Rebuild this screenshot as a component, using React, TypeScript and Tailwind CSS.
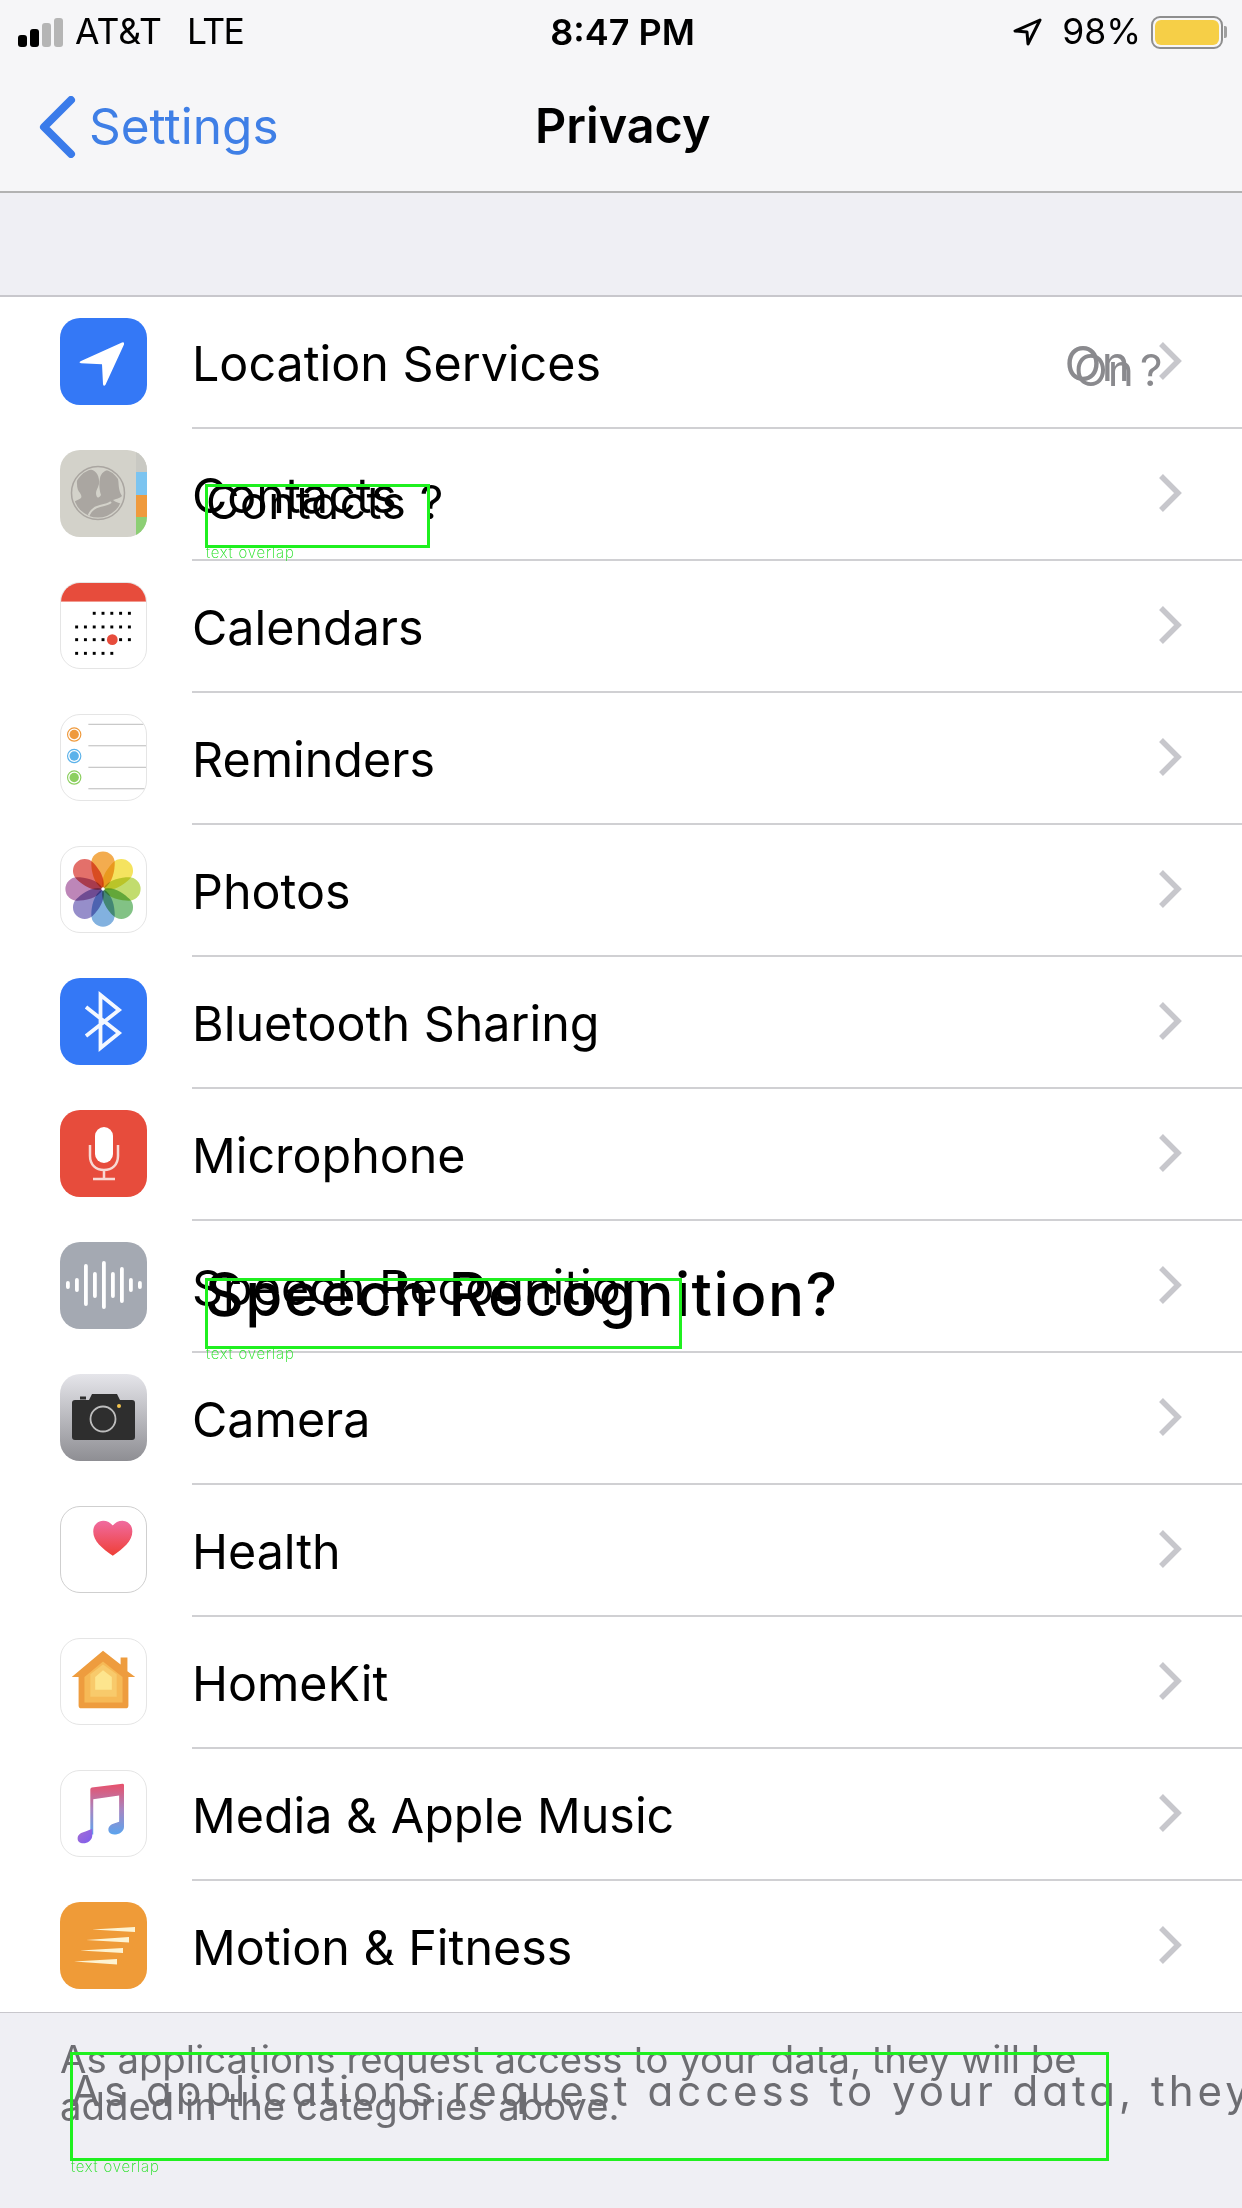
import { ReactNode } from "react";

const Tile = ({ children, className = "" }: { children: ReactNode; className?: string }) => (
  <div className={`h-[87px] w-[87px] shrink-0 overflow-hidden rounded-[20px] ${className}`}>
    <svg viewBox="0 0 87 87" className="h-full w-full">
      {children}
    </svg>
  </div>
);

const LocationIcon = () => (
  <Tile className="bg-[#3478f6]">
    <path d="M62 24.5 21 43q-3 1.500 0 2.200l21 1 1 20q.8 2.800 2.500.5L64 26.500q.5-3-2-2Z" fill="#fff" />
  </Tile>
);

const ContactsIcon = () => (
  <Tile className="bg-[#d3d2ca]">
    <rect x="76" y="0" width="11" height="22" fill="#c9c9c3" />
    <rect x="76" y="22" width="11" height="23" fill="#7cc4f0" />
    <rect x="76" y="45" width="11" height="22" fill="#ef9a3d" />
    <rect x="76" y="67" width="11" height="20" fill="#8ccf74" />
    <defs>
      <clipPath id="faces">
        <circle cx="38" cy="43" r="24.500" />
      </clipPath>
    </defs>
    <circle cx="38" cy="43" r="26.500" fill="none" stroke="#aaa6a1" strokeWidth="1.500" />
    <g clipPath="url(#faces)">
      <path d="M40 28c1-5 5-8 9-8s8 3 9 8c1 6 0 12 4 18-3 3-7 3-9 4 3 3 10 3 13 8v15H30V50c4-2 9-1 11-5 -2-6-2-12-1-17Z" fill="#aaa6a1" />
      <path d="M17 34c-1-9 4-15 11-15s12 6 11 15c-1 4-3 6-3 9 0 3 1 5 4 6 -3 1-7 4-8 9l-3 14H6V58c2-6 12-7 15-10 1-2 0-3-1-5-2-2-3-5-3-9Z" fill="#aaa6a1" />
      <path d="M27 72c1-8 4-14 13-16 5-1 9-2 11-4" fill="none" stroke="#d3d2ca" strokeWidth="2" />
    </g>
  </Tile>
);

const CalendarIcon = () => {
  const xs = [16, 25, 34, 43, 52, 61, 70];
  return (
    <Tile className="border border-[#e5e5e5] bg-white">
      <rect x="-2" y="-2" width="92" height="21" fill="#e74c3c" />
      {xs.slice(2).map((x) => <rect key={`a${x}`} x={x - 1.500} y="29.500" width="3" height="3" />)}
      {xs.map((x) => <rect key={`b${x}`} x={x - 1.500} y="43.500" width="3" height="3" />)}
      {xs.map((x) => <rect key={`c${x}`} x={x - 1.500} y="56.500" width="3" height="3" />)}
      {xs.slice(0, 5).map((x) => <rect key={`d${x}`} x={x - 1.500} y="70.500" width="3" height="3" />)}
      <circle cx="52.500" cy="58" r="5.500" fill="#e74c3c" />
    </Tile>
  );
};

const RemindersIcon = () => (
  <Tile className="border border-[#e5e5e5] bg-white">
    {[9, 31, 53, 75].map((y) => <rect key={y} x="28" y={y} width="60" height="1" fill="#b9b9b9" />)}
    {[["#ef9a3d", 20], ["#5bb2ea", 42], ["#8ccf5f", 64]].map(([c, y]) => (
      <g key={y}>
        <circle cx="13.500" cy={y} r="6.800" fill="none" stroke={c as string} strokeWidth="1.200" />
        <circle cx="13.500" cy={y} r="4.800" fill={c as string} />
      </g>
    ))}
  </Tile>
);

const PhotosIcon = () => {
  const petals = ["#f2a33c", "#f4e04d", "#bcd95e", "#74bb78", "#74a9dc", "#8b82c4", "#b679b0", "#e0605a"];
  return (
    <Tile className="border border-[#e5e5e5] bg-white">
      {petals.map((c, i) => (
        <path
          key={c}
          d="M43 43C33 38 31 24 31 16.500a12 12 0 0 1 24 0C55 24 53 38 43 43Z"
          fill={c}
          className="mix-blend-multiply"
          opacity="0.9"
          transform={`rotate(${i * 45} 43 43)`}
        />
      ))}
      <circle cx="43" cy="43" r="1.800" fill="#fff" />
    </Tile>
  );
};

const BluetoothIcon = () => (
  <Tile className="bg-[#3478f6]">
    <path d="M26 29 59 55 40.500 70V17L59 32 26 58" fill="none" stroke="#f4f8ff" strokeWidth="3.800" />
  </Tile>
);

const MicIcon = () => (
  <Tile className="bg-[#e74c3c]">
    <rect x="35" y="17" width="18" height="36" rx="9" fill="#fff" />
    <path d="M30 35v11c0 9 6 14 14 14s14-5 14-14V35M44 60v8M33 69h22" fill="none" stroke="#f8d9d4" strokeWidth="2.500" />
  </Tile>
);

const SpeechIcon = () => {
  const bars = [8, 14, 42, 26, 48, 26, 36, 14, 8];
  return (
    <Tile className="bg-[#a4a9b2]">
      {bars.map((h, i) => (
        <rect key={i} x={6 + i * 9} y={43 - h / 2} width="3.800" height={h} rx="1.900" fill="#fff" />
      ))}
    </Tile>
  );
};

const CameraIcon = () => (
  <Tile className="bg-[linear-gradient(#e5e5ea,#8e8e93)]">
    <path d="M12 29a3 3 0 0 1 3-3h14l3-6h25l3 6h12a3 3 0 0 1 3 3v34a3 3 0 0 1-3 3H15a3 3 0 0 1-3-3Z" fill="#2e2e2e" />
    <rect x="20" y="22.500" width="6" height="3" fill="#2e2e2e" />
    <circle cx="43" cy="45" r="12.500" fill="none" stroke="#bdbdbd" strokeWidth="1.800" />
    <circle cx="59" cy="32" r="2" fill="#f3c44f" />
  </Tile>
);

const HealthIcon = () => (
  <Tile className="border border-[#cfcfcf] bg-white">
    <defs>
      <linearGradient id="heart" x1="0" y1="0" x2="0" y2="1">
        <stop offset="0" stopColor="#f06ba0" />
        <stop offset="1" stopColor="#ef3f36" />
      </linearGradient>
    </defs>
    <path d="M53 50C42 42 33 35 33 25c0-6 4-11 10-11 4 0 8 2 10 5 2-3 6-5 10-5 6 0 10 5 10 11 0 10-9 17-20 25Z" fill="url(#heart)" />
  </Tile>
);

const HomeIcon = () => (
  <Tile className="border border-[#e5e5e5] bg-white">
    <path d="M43 12 61 26V19h7v14l8 6h-7v29a3 3 0 0 1-3 3H21a3 3 0 0 1-3-3V39h-7Z" fill="#ee9c3e" />
    <path d="M43 23 63 39v26H24V39Z" fill="#f6b956" />
    <path d="M43 26 57 36v23H30V36Z" fill="#f8ca6b" />
    <path d="M43 32 52 39v13H35V39Z" fill="#fde58e" />
  </Tile>
);

const MusicIcon = () => (
  <Tile className="border border-[#e5e5e5] bg-white">
    <defs>
      <linearGradient id="note" x1="0" y1="0" x2="0" y2="1">
        <stop offset="0" stopColor="#e9506a" />
        <stop offset="0.5" stopColor="#a985c0" />
        <stop offset="1" stopColor="#5ba4ee" />
      </linearGradient>
      <linearGradient id="noteLeft" x1="0" y1="0" x2="1" y2="1">
        <stop offset="0" stopColor="#a76fd0" />
        <stop offset="1" stopColor="#7c5cf0" />
      </linearGradient>
    </defs>
    <path d="M30 19q0-1.500 1.500-2L63 13q1.500 0 1.500 1.500V57c0 5-5 8-10 8-4 0-6-2-6-5 0-4 4-6 8-7l3-1V25L33 29v36h-3Z" fill="url(#note)" />
    <path d="M32 59v7c0 5-5 8-9 8-4 0-6-2-6-5 0-4 4-6 8-7l7-3Z" fill="url(#noteLeft)" />
  </Tile>
);

const MotionIcon = () => (
  <Tile className="bg-[#ef9b38]">
    <path d="M32 27.500 75 25v5ZM26 38l43-3v5.500ZM20 48.500 63 46v5ZM14 59.500l43 -2.500v5.500Z" fill="#fdf3d2" />
  </Tile>
);

const rows: { label: string; icon: ReactNode; detail?: string }[] = [
  { label: "Location Services", icon: <LocationIcon />, detail: "On" },
  { label: "Contacts", icon: <ContactsIcon /> },
  { label: "Calendars", icon: <CalendarIcon /> },
  { label: "Reminders", icon: <RemindersIcon /> },
  { label: "Photos", icon: <PhotosIcon /> },
  { label: "Bluetooth Sharing", icon: <BluetoothIcon /> },
  { label: "Microphone", icon: <MicIcon /> },
  { label: "Speech Recognition", icon: <SpeechIcon /> },
  { label: "Camera", icon: <CameraIcon /> },
  { label: "Health", icon: <HealthIcon /> },
  { label: "HomeKit", icon: <HomeIcon /> },
  { label: "Media & Apple Music", icon: <MusicIcon /> },
  { label: "Motion & Fitness", icon: <MotionIcon /> },
];

const Chevron = () => (
  <svg viewBox="0 0 24 40" className="mb-[3px] h-[40px] w-[24px] shrink-0">
    <path d="M3 3 20 20 3 37" fill="none" stroke="#c7c7cc" strokeWidth="5.500" />
  </svg>
);

const Row = ({ label, icon, detail, last }: { label: string; icon: ReactNode; detail?: string; last: boolean }) => (
  <div className={`flex h-[132px] pl-[60px] ${last ? "border-b border-[#c8c7cc]" : ""}`}>
    <div className="pt-[21px]">{icon}</div>
    <div className={`ml-[45px] flex flex-1 items-center pr-[60px] ${last ? "" : "border-b-2 border-[#d0d0d3]"}`}>
      <span className="flex-1 pt-[4px] text-[48.400px] leading-none text-black">{label}</span>
      {detail && <span className="mr-[28px] pt-[4px] text-[48.400px] leading-none text-[#8a8a8e]">{detail}</span>}
      <Chevron />
    </div>
  </div>
);

const StatusBar = () => (
  <div className="flex h-[62px] items-center justify-between pl-[18px] pr-[15px] pt-[2px] text-[35.500px] text-black">
    <div className="flex flex-1 items-center">
      <div className="flex items-end gap-[3px]">
        <div className="h-[12px] w-[9px] rounded-[3px] bg-black" />
        <div className="h-[18px] w-[9px] rounded-[3px] bg-black" />
        <div className="h-[24px] w-[9px] rounded-[3px] bg-[#b5b5b5]" />
        <div className="h-[29px] w-[9px] rounded-[3px] bg-[#b5b5b5]" />
      </div>
      <span className="ml-[12px]">AT&amp;T</span>
      <span className="ml-[25px] tracking-[-1.500px]">LTE</span>
    </div>
    <span className="text-[36px] font-semibold">8:47 PM</span>
    <div className="flex flex-1 items-center justify-end">
      <svg viewBox="0 0 30 30" className="h-[30px] w-[30px]">
        <path d="M28 3 3 14l12 1 1 12Z" fill="none" stroke="#000" strokeWidth="3" strokeLinejoin="round" />
      </svg>
      <span className="ml-[20px]">98%</span>
      <div className="ml-[10px] flex h-[33px] w-[72px] items-center rounded-[9px] border-2 border-[#8e8e8e] p-[2px]">
        <div className="h-full w-full rounded-[6px] bg-[#f6cf47]" />
      </div>
      <div className="ml-[1px] h-[12px] w-[3px] rounded-r-[2px] bg-[#a0a0a0]" />
    </div>
  </div>
);

const NavBar = () => (
  <div className="relative flex h-[131px] items-center border-b-2 border-[#b2b2b2] pl-[38px]">
    <svg viewBox="0 0 38 62" className="h-[62px] w-[38px]">
      <path d="M33 4 6 31l27 27" fill="none" stroke="#3a7bea" strokeWidth="8" strokeLinecap="round" strokeLinejoin="round" />
    </svg>
    <span className="ml-[13px] text-[49.500px] leading-none text-[#3f7fe6]">Settings</span>
    <span className="absolute left-[535px] text-[48.500px] font-semibold leading-none text-black">Privacy</span>
  </div>
);

// stray second copy of the labels and the green marks, as they sit on top of the screenshot
const Marks = () => (
  <div className="pointer-events-none absolute inset-0 overflow-hidden">
    <span className="absolute left-[1074px] top-[340px] text-[44px] leading-[60px] text-[#8a8a8e] [word-spacing:-6px]">On ?</span>
    <span className="absolute left-[206px] top-[472px] text-[46px] leading-[60px] tracking-[0.5px] text-black [font-feature-settings:'cv11']">Contacts ?</span>
    <span className="absolute left-[205px] top-[1256px] text-[60px] font-[450] leading-[76px] tracking-[1.500px] text-black [font-feature-settings:'cv11']">Speech Recognition?</span>
    <span className="absolute left-[71px] top-[2066px] whitespace-nowrap text-[42px] leading-[50px] tracking-[4px] text-[#6d6d72] [font-feature-settings:'cv11']">As applications request access to your data, they will be</span>

    <div className="absolute left-[205px] top-[484px] h-[64px] w-[225px] border-[3px] border-[#1ff01f]" />
    <span className="absolute left-[206px] top-[544px] text-[15px] font-[200] leading-[18px] tracking-[0.8px] text-[#22e022]">text overlap</span>
    <div className="absolute left-[205px] top-[1278px] h-[71px] w-[477px] border-[3px] border-[#1ff01f]" />
    <span className="absolute left-[206px] top-[1345px] text-[15px] font-[200] leading-[18px] tracking-[0.8px] text-[#22e022]">text overlap</span>
    <div className="absolute left-[70px] top-[2052px] h-[109px] w-[1039px] border-[3px] border-[#1ff01f]" />
    <span className="absolute left-[71px] top-[2158px] text-[15px] font-[200] leading-[18px] tracking-[0.8px] text-[#22e022]">text overlap</span>
  </div>
);

export default function App() {
  return (
    <div className="relative h-[2208px] w-[1242px] overflow-hidden bg-[#efeff4] font-['Inter',sans-serif]">
      <div className="bg-[#f6f6f8]">
        <StatusBar />
        <NavBar />
      </div>
      <div className="mt-[102px] border-t-2 border-[#c8c7cc] bg-white">
        {rows.map((row, i) => (
          <Row key={row.label} {...row} last={i === rows.length - 1} />
        ))}
      </div>
      <p className="px-[60px] pt-[23px] text-[38.300px] leading-[47px] text-[#6d6d72]">
        As applications request access to your data, they will be added in the categories above.
      </p>
      <Marks />
    </div>
  );
}
